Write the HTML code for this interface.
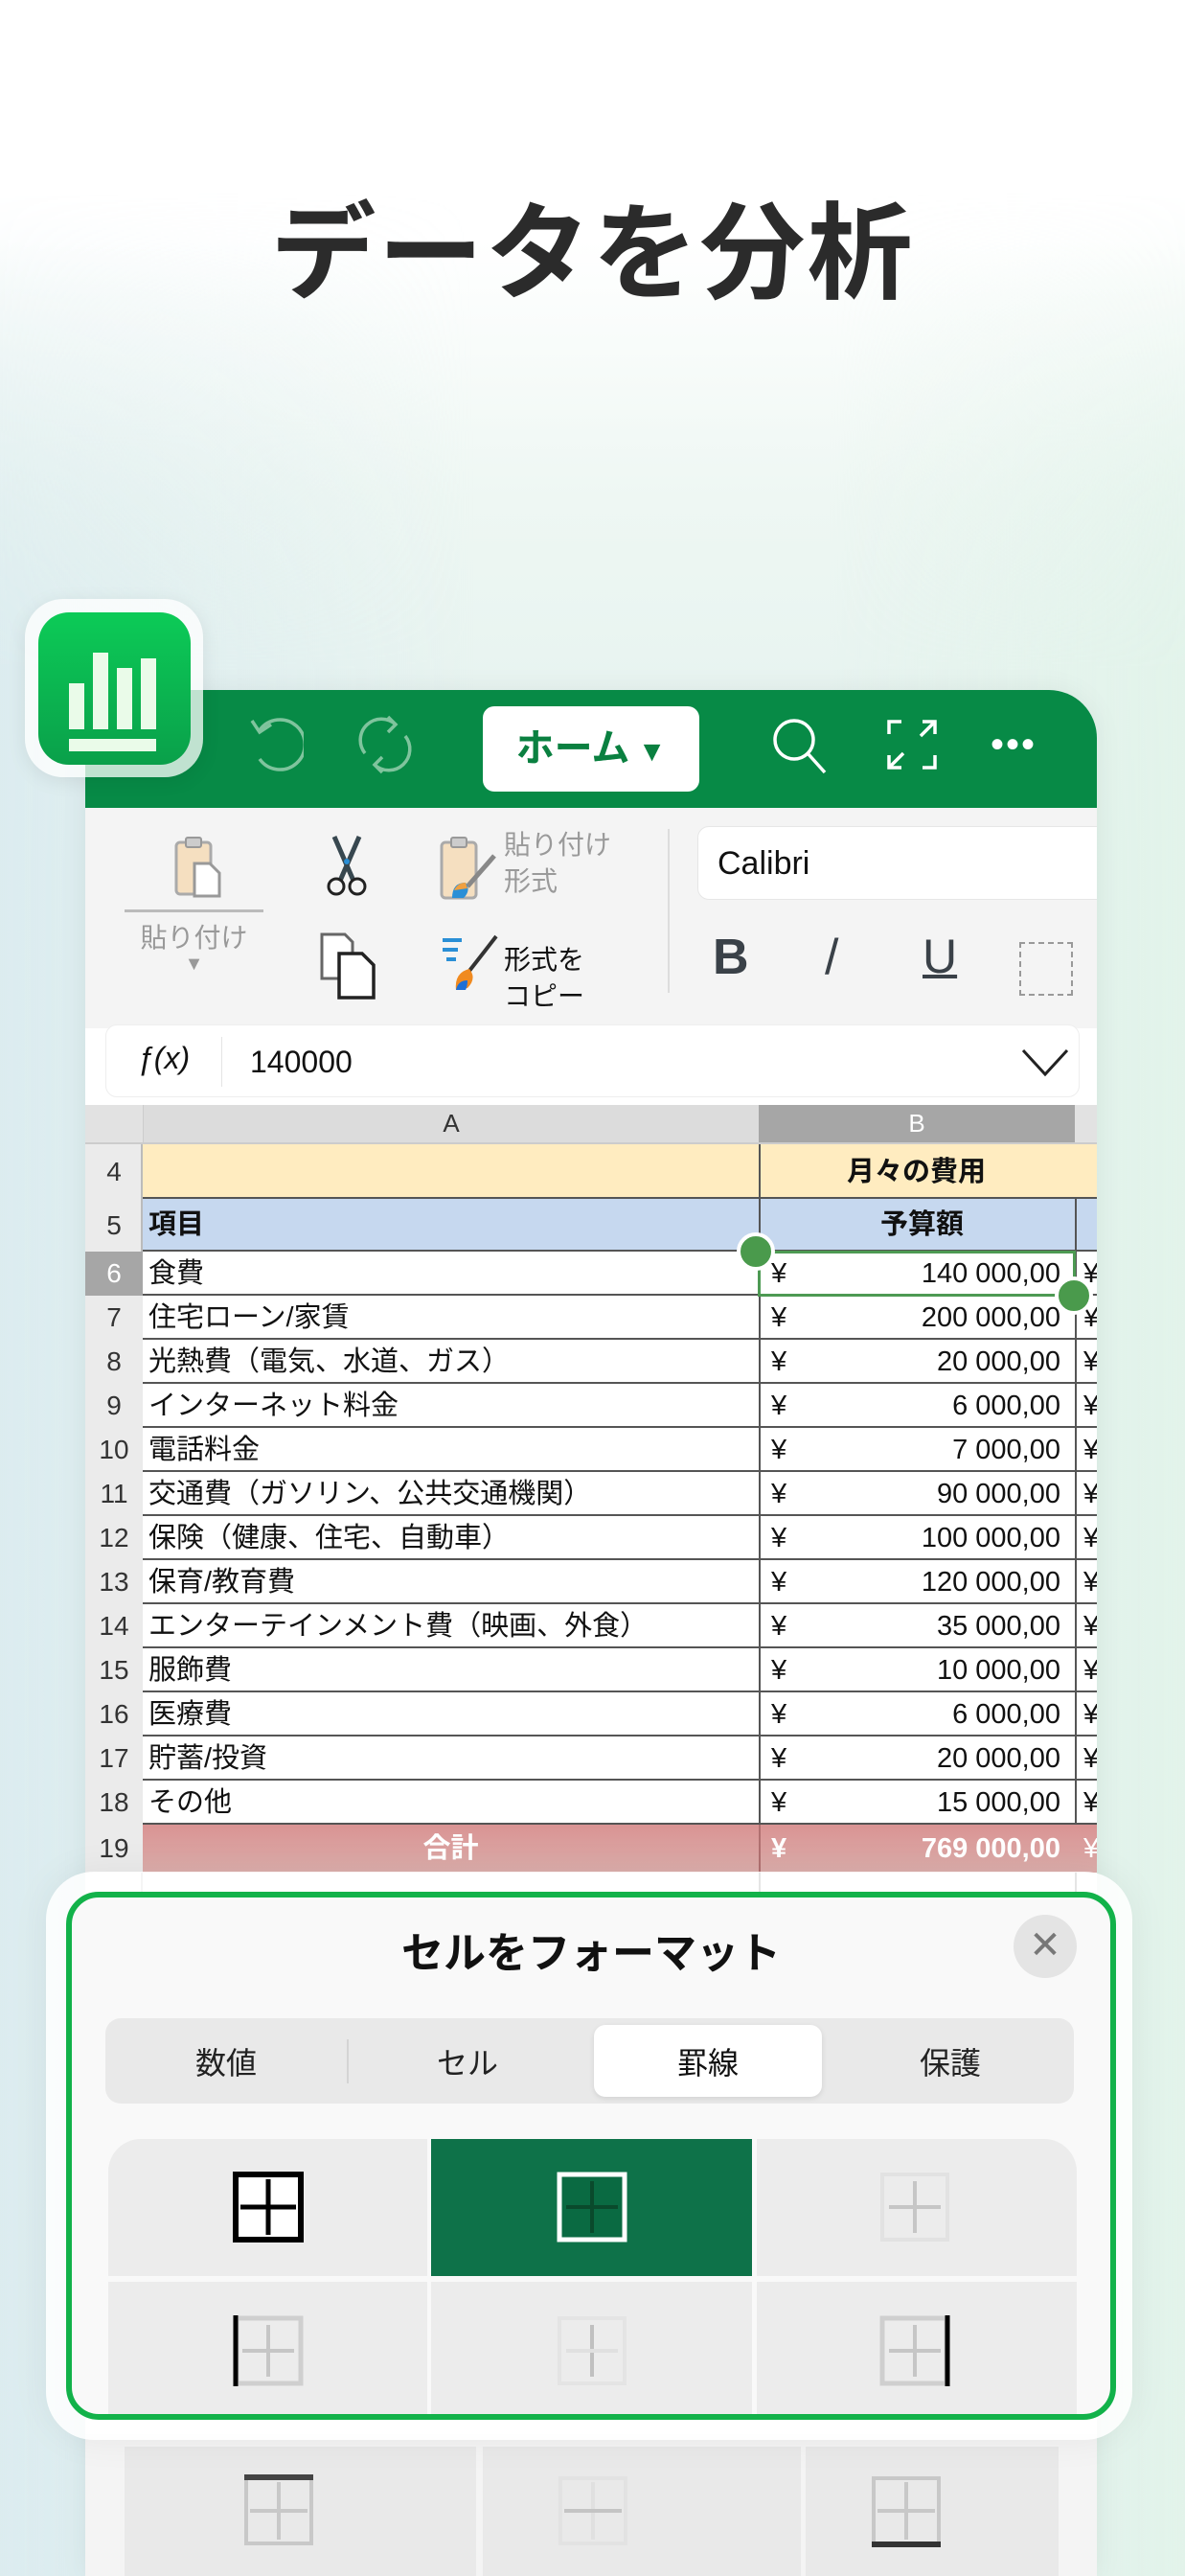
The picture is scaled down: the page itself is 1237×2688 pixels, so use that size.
<!DOCTYPE html>
<html><head><meta charset="utf-8"><style>
*{margin:0;padding:0;box-sizing:border-box}
body{width:1237px;height:2688px;overflow:hidden;position:relative;font-family:"Liberation Sans","Noto Sans CJK JP",sans-serif;
background:linear-gradient(180deg,#fff 0px,#fff 250px,#eef7f3 520px,#e2f1ee 900px,#e0efef 2688px);}
.abs{position:absolute}
.bgl{position:absolute;left:0;top:200px;width:1237px;height:2488px;background:linear-gradient(90deg,#dcecef 0%,rgba(230,243,240,0) 40%,rgba(225,242,234,0) 70%,#e2f3ea 100%);-webkit-mask-image:linear-gradient(180deg,transparent 0,#000 500px);mask-image:linear-gradient(180deg,transparent 0,#000 500px)}
h1{position:absolute;top:196px;left:0;width:1237px;text-align:center;font-size:110px;font-weight:bold;color:#2b2b2b;letter-spacing:2px;line-height:140px}
.win{position:absolute;left:89px;top:720px;width:1056px;height:1968px;background:#fff;border-radius:50px 50px 0 0;overflow:hidden;box-shadow:0 0 30px rgba(0,0,0,.06)}
.hdr{position:absolute;left:0;top:0;width:1056px;height:123px;background:#078a46}
.tb{position:absolute;left:0;top:123px;width:1056px;height:230px;background:#f4f4f4}
.cell{position:absolute;font-size:29px;color:#111;white-space:nowrap;line-height:46px}
.rn{position:absolute;left:0;width:60px;background:#ebebeb;color:#333;font-size:28px;text-align:center}
.row{position:absolute;left:0;width:1056px;border-bottom:2px solid #555}
</style></head><body>
<div class="bgl"></div>
<h1>データを分析</h1>

<div class="win">
 <div class="hdr">
  <svg class="abs" style="left:168px;top:24px" width="60" height="64" viewBox="0 0 60 64"><path d="M14 18 A26 26 0 1 1 14 48" fill="none" stroke="#7fc49d" stroke-width="3.5"/><path d="M6 8 L14 20 L26 12" fill="none" stroke="#7fc49d" stroke-width="3.5"/></svg>
  <svg class="abs" style="left:278px;top:22px" width="70" height="70" viewBox="0 0 70 70"><path d="M14 44 A22 22 0 0 1 46 14" fill="none" stroke="#7fc49d" stroke-width="3.5"/><path d="M56 26 A22 22 0 0 1 24 56" fill="none" stroke="#7fc49d" stroke-width="3.5"/><path d="M38 6 L46 14 L38 22" fill="none" stroke="#7fc49d" stroke-width="3.5"/><path d="M32 48 L24 56 L32 64" fill="none" stroke="#7fc49d" stroke-width="3.5"/></svg>
  <div class="abs" style="left:415px;top:17px;width:226px;height:89px;background:#fff;border-radius:12px;color:#0a8040;font-size:40px;font-weight:bold;line-height:89px;text-align:center">ホーム<span style="font-size:30px"> ▼</span></div>
  <svg class="abs" style="left:716px;top:28px" width="62" height="62" viewBox="0 0 62 62"><circle cx="24" cy="24" r="20" fill="none" stroke="#fff" stroke-width="3.5"/><path d="M38 38 L56 58" stroke="#fff" stroke-width="3.5"/></svg>
  <svg class="abs" style="left:836px;top:30px" width="54" height="54" viewBox="0 0 54 54" fill="none" stroke="#fff" stroke-width="3.5"><path d="M3 16V3H16M38 3H51V16M51 3L36 18M3 38V51H16M3 51L18 36M38 51H51V38"/></svg>
  <div class="abs" style="left:945px;top:42px;width:70px;font-size:40px;color:#fff;letter-spacing:2px;line-height:30px">•••</div>
 </div>
 <div class="tb">
  <svg class="abs" style="left:92px;top:28px" width="52" height="66" viewBox="0 0 52 66"><rect x="3" y="8" width="36" height="54" rx="4" fill="#f5dfc0" stroke="#aaa" stroke-width="3"/><rect x="13" y="3" width="16" height="10" rx="2" fill="#ccc" stroke="#999" stroke-width="2"/><path d="M22 30h16l10 10v24H22z" fill="#fff" stroke="#999" stroke-width="3"/></svg>
  <div class="abs" style="left:41px;top:106px;width:145px;height:3px;background:#bbb"></div>
  <div class="abs" style="left:41px;top:114px;width:145px;text-align:center;font-size:28px;color:#999">貼り付け</div>
  <div class="abs" style="left:41px;top:152px;width:145px;text-align:center;font-size:20px;color:#999">▼</div>
  <svg class="abs" style="left:250px;top:28px" width="46" height="66" viewBox="0 0 46 66"><path d="M10 2 L30 48 M36 2 L16 48" stroke="#37474f" stroke-width="5"/><circle cx="12" cy="54" r="8" fill="none" stroke="#222" stroke-width="3"/><circle cx="34" cy="54" r="8" fill="none" stroke="#222" stroke-width="3"/><circle cx="23" cy="28" r="3" fill="#2a8fd6"/></svg>
  <svg class="abs" style="left:243px;top:128px" width="64" height="72" viewBox="0 0 64 72"><path d="M4 4h24l8 8v38H4z" fill="#fff" stroke="#666" stroke-width="3"/><path d="M22 24h24l12 12v34H22z" fill="#fff" stroke="#222" stroke-width="3.5"/></svg>
  <svg class="abs" style="left:369px;top:28px" width="64" height="70" viewBox="0 0 64 70"><rect x="3" y="8" width="36" height="58" rx="4" fill="#f5dfc0" stroke="#aaa" stroke-width="3"/><rect x="13" y="3" width="16" height="10" rx="2" fill="#ccc" stroke="#999" stroke-width="2"/><path d="M58 22 L30 54" stroke="#888" stroke-width="5"/><path d="M14 66 Q14 50 28 50 Q34 58 26 66Z" fill="#2a8fd6"/><path d="M16 58 Q20 50 28 50 L30 56Z" fill="#f0a040"/></svg>
  <div class="abs" style="left:437px;top:20px;font-size:28px;color:#9a9a9a;line-height:38px">貼り付け<br>形式</div>
  <svg class="abs" style="left:369px;top:132px" width="64" height="60" viewBox="0 0 64 60"><path d="M4 6h20M4 16h16M8 26h10" stroke="#2a8fd6" stroke-width="4"/><path d="M60 2 L32 38" stroke="#333" stroke-width="4"/><path d="M18 58 Q16 40 32 36 Q40 46 30 56Z" fill="#f08a20"/><path d="M18 58 Q20 48 30 48 Q30 54 28 58Z" fill="#1d6fd6"/></svg>
  <div class="abs" style="left:437px;top:140px;font-size:28px;color:#111;line-height:38px">形式を<br>コピー</div>
  <div class="abs" style="left:608px;top:22px;width:2px;height:171px;background:#ddd"></div>
  <div class="abs" style="left:639px;top:19px;width:430px;height:77px;background:#fff;border-radius:12px;border:1px solid #e6e6e6;font-size:34px;line-height:77px;padding-left:20px;color:#111">Calibri</div>
  <div class="abs" style="left:655px;top:126px;font-size:52px;font-weight:bold;color:#3a4148">B</div>
  <div class="abs" style="left:772px;top:126px;font-size:52px;color:#3a4148">/</div>
  <div class="abs" style="left:874px;top:126px;font-size:50px;color:#3a4148;text-decoration:underline;text-decoration-thickness:4px">U</div>
  <div class="abs" style="left:975px;top:140px;width:56px;height:56px;border:2px dashed #999"></div>
 </div>
 <div class="abs" style="left:21px;top:349px;width:1017px;height:76px;background:#fff;border-radius:12px;border:1px solid #eee">
  <div class="abs" style="left:32px;top:16px;font-size:32px;font-style:italic;color:#111">ƒ(x)</div>
  <div class="abs" style="left:120px;top:12px;width:1px;height:52px;background:#e4e4e4"></div>
  <div class="abs" style="left:150px;top:20px;font-size:32px;color:#111">140000</div>
  <svg class="abs" style="left:955px;top:24px" width="50" height="30" viewBox="0 0 50 30"><path d="M2 2 L25 27 L48 2" fill="none" stroke="#222" stroke-width="3"/></svg>
 </div>
 <div class="abs" style="left:0;top:433px;width:1056px;height:39px;background:#e2e2e2"></div>
 <div class="abs" style="left:60px;top:433px;width:643px;height:39px;background:#dcdcdc;text-align:center;font-size:26px;line-height:39px;color:#333;border-left:1px solid #ccc">A</div>
 <div class="abs" style="left:703px;top:433px;width:330px;height:39px;background:#a6a6a6;text-align:center;font-size:26px;line-height:39px;color:#fff">B</div>
 <div class="abs" style="left:0;top:472px;width:1056px;height:2px;background:#ccc"></div>

 <div class="row" style="top:474px;height:57px;background:#ffecc0"></div>
 <div class="rn" style="top:474px;height:57px;line-height:57px">4</div>
 <div class="cell" style="left:795px;top:480px;font-weight:bold">月々の費用</div>
 <div class="row" style="top:531px;height:55px;background:#c6d8ef"></div>
 <div class="rn" style="top:531px;height:55px;line-height:55px">5</div>
 <div class="cell" style="left:66px;top:535px;font-weight:bold">項目</div>
 <div class="cell" style="left:830px;top:535px;font-weight:bold">予算額</div>

 <div class="abs" style="left:703px;top:474px;width:2px;height:1260px;background:#555"></div>
 <div class="abs" style="left:1033px;top:531px;width:2px;height:1200px;background:#555"></div>
 <div class="abs" style="left:58px;top:474px;width:2px;height:1260px;background:#bbb"></div>

 <div class="rn" style="top:586px;height:46px;line-height:46px;background:#a6a6a6;color:#fff">6</div>
 <div class="cell" style="left:66px;top:586px">食費</div><div class="cell" style="left:716px;top:586px">¥</div><div class="cell" style="right:38px;top:586px">140 000,00</div><div class="cell" style="left:1042px;top:586px">¥</div>
 <div class="row" style="top:586px;height:46px;left:60px;width:996px"></div>
 <div class="rn" style="top:632px;height:46px;line-height:46px">7</div>
 <div class="cell" style="left:66px;top:632px">住宅ローン/家賃</div><div class="cell" style="left:716px;top:632px">¥</div><div class="cell" style="right:38px;top:632px">200 000,00</div><div class="cell" style="left:1042px;top:632px">¥</div>
 <div class="row" style="top:632px;height:46px;left:60px;width:996px"></div>
 <div class="rn" style="top:678px;height:46px;line-height:46px">8</div>
 <div class="cell" style="left:66px;top:678px">光熱費（電気、水道、ガス）</div><div class="cell" style="left:716px;top:678px">¥</div><div class="cell" style="right:38px;top:678px">20 000,00</div><div class="cell" style="left:1042px;top:678px">¥</div>
 <div class="row" style="top:678px;height:46px;left:60px;width:996px"></div>
 <div class="rn" style="top:724px;height:46px;line-height:46px">9</div>
 <div class="cell" style="left:66px;top:724px">インターネット料金</div><div class="cell" style="left:716px;top:724px">¥</div><div class="cell" style="right:38px;top:724px">6 000,00</div><div class="cell" style="left:1042px;top:724px">¥</div>
 <div class="row" style="top:724px;height:46px;left:60px;width:996px"></div>
 <div class="rn" style="top:770px;height:46px;line-height:46px">10</div>
 <div class="cell" style="left:66px;top:770px">電話料金</div><div class="cell" style="left:716px;top:770px">¥</div><div class="cell" style="right:38px;top:770px">7 000,00</div><div class="cell" style="left:1042px;top:770px">¥</div>
 <div class="row" style="top:770px;height:46px;left:60px;width:996px"></div>
 <div class="rn" style="top:816px;height:46px;line-height:46px">11</div>
 <div class="cell" style="left:66px;top:816px">交通費（ガソリン、公共交通機関）</div><div class="cell" style="left:716px;top:816px">¥</div><div class="cell" style="right:38px;top:816px">90 000,00</div><div class="cell" style="left:1042px;top:816px">¥</div>
 <div class="row" style="top:816px;height:46px;left:60px;width:996px"></div>
 <div class="rn" style="top:862px;height:46px;line-height:46px">12</div>
 <div class="cell" style="left:66px;top:862px">保険（健康、住宅、自動車）</div><div class="cell" style="left:716px;top:862px">¥</div><div class="cell" style="right:38px;top:862px">100 000,00</div><div class="cell" style="left:1042px;top:862px">¥</div>
 <div class="row" style="top:862px;height:46px;left:60px;width:996px"></div>
 <div class="rn" style="top:908px;height:46px;line-height:46px">13</div>
 <div class="cell" style="left:66px;top:908px">保育/教育費</div><div class="cell" style="left:716px;top:908px">¥</div><div class="cell" style="right:38px;top:908px">120 000,00</div><div class="cell" style="left:1042px;top:908px">¥</div>
 <div class="row" style="top:908px;height:46px;left:60px;width:996px"></div>
 <div class="rn" style="top:954px;height:46px;line-height:46px">14</div>
 <div class="cell" style="left:66px;top:954px">エンターテインメント費（映画、外食）</div><div class="cell" style="left:716px;top:954px">¥</div><div class="cell" style="right:38px;top:954px">35 000,00</div><div class="cell" style="left:1042px;top:954px">¥</div>
 <div class="row" style="top:954px;height:46px;left:60px;width:996px"></div>
 <div class="rn" style="top:1000px;height:46px;line-height:46px">15</div>
 <div class="cell" style="left:66px;top:1000px">服飾費</div><div class="cell" style="left:716px;top:1000px">¥</div><div class="cell" style="right:38px;top:1000px">10 000,00</div><div class="cell" style="left:1042px;top:1000px">¥</div>
 <div class="row" style="top:1000px;height:46px;left:60px;width:996px"></div>
 <div class="rn" style="top:1046px;height:46px;line-height:46px">16</div>
 <div class="cell" style="left:66px;top:1046px">医療費</div><div class="cell" style="left:716px;top:1046px">¥</div><div class="cell" style="right:38px;top:1046px">6 000,00</div><div class="cell" style="left:1042px;top:1046px">¥</div>
 <div class="row" style="top:1046px;height:46px;left:60px;width:996px"></div>
 <div class="rn" style="top:1092px;height:46px;line-height:46px">17</div>
 <div class="cell" style="left:66px;top:1092px">貯蓄/投資</div><div class="cell" style="left:716px;top:1092px">¥</div><div class="cell" style="right:38px;top:1092px">20 000,00</div><div class="cell" style="left:1042px;top:1092px">¥</div>
 <div class="row" style="top:1092px;height:46px;left:60px;width:996px"></div>
 <div class="rn" style="top:1138px;height:46px;line-height:46px">18</div>
 <div class="cell" style="left:66px;top:1138px">その他</div><div class="cell" style="left:716px;top:1138px">¥</div><div class="cell" style="right:38px;top:1138px">15 000,00</div><div class="cell" style="left:1042px;top:1138px">¥</div>
 <div class="row" style="top:1138px;height:46px;left:60px;width:996px"></div>
 <div class="abs" style="left:60px;top:1184px;width:996px;height:50px;background:linear-gradient(180deg,#d99393,#dcaeab)"></div>
 <div class="rn" style="top:1184px;height:50px;line-height:50px">19</div>
 <div class="cell" style="left:60px;width:643px;text-align:center;top:1186px;color:#fff;font-weight:bold">合計</div><div class="cell" style="left:716px;top:1186px;color:#fff;font-weight:bold">¥</div><div class="cell" style="right:38px;top:1186px;color:#fff;font-weight:bold">769 000,00</div><div class="cell" style="left:1042px;top:1186px;color:#fff">¥</div>
 <div class="abs" style="left:703px;top:1184px;width:2px;height:50px;background:#b07070"></div>
 <div class="abs" style="left:702px;top:585px;width:332px;height:48px;border:3px solid #4d9a53"></div>
 <div class="abs" style="left:680px;top:566px;width:40px;height:40px;border-radius:50%;background:#4a9a4c;border:4px solid #fff"></div>
 <div class="abs" style="left:1012px;top:612px;width:40px;height:40px;border-radius:50%;background:#4a9a4c;border:4px solid #fff"></div>

 <div class="abs" style="left:0;top:1820px;width:1056px;height:150px;background:#f4f4f4"></div>
 <div class="abs" style="left:41px;top:1833px;width:367px;height:140px;background:#e9e9e9"></div>
 <div class="abs" style="left:415px;top:1833px;width:332px;height:140px;background:#e9e9e9"></div>
 <div class="abs" style="left:752px;top:1833px;width:264px;height:140px;background:#e9e9e9"></div>
 <svg class="abs" style="left:165px;top:1862px" width="74" height="76" viewBox="0 0 74 76"><rect x="3" y="4" width="68" height="68" fill="none" stroke="#c8c8c8" stroke-width="4"/><path d="M37 8V68M7 38H67" stroke="#c8c8c8" stroke-width="4"/><path d="M1 3H73" stroke="#444" stroke-width="6"/></svg>
 <svg class="abs" style="left:493px;top:1862px" width="74" height="76" viewBox="0 0 74 76"><rect x="3" y="4" width="68" height="68" fill="none" stroke="#e2e2e2" stroke-width="4"/><path d="M37 8V68" stroke="#e0e0e0" stroke-width="4"/><path d="M7 38H67" stroke="#c4c4c4" stroke-width="4"/></svg>
 <svg class="abs" style="left:820px;top:1862px" width="74" height="76" viewBox="0 0 74 76"><rect x="3" y="4" width="68" height="68" fill="none" stroke="#c8c8c8" stroke-width="4"/><path d="M37 8V68M7 38H67" stroke="#c8c8c8" stroke-width="4"/><path d="M1 73H73" stroke="#333" stroke-width="6"/></svg>
</div>

<div class="abs" style="left:26px;top:625px;width:186px;height:186px;border-radius:40px;background:rgba(255,255,255,.75);box-shadow:0 4px 20px rgba(0,0,0,.08)"></div>
<div class="abs" style="left:40px;top:639px;width:159px;height:159px;border-radius:32px;background:linear-gradient(180deg,#0ccb57,#0aa04a)">
 <div class="abs" style="left:32px;top:74px;width:16px;height:48px;background:#eafbe9"></div>
 <div class="abs" style="left:57px;top:42px;width:16px;height:80px;background:#eafbe9"></div>
 <div class="abs" style="left:82px;top:58px;width:16px;height:64px;background:#eafbe9"></div>
 <div class="abs" style="left:107px;top:48px;width:16px;height:74px;background:#eafbe9"></div>
 <div class="abs" style="left:32px;top:132px;width:91px;height:13px;background:#eafbe9"></div>
</div>

<div class="abs" style="left:48px;top:1953px;width:1134px;height:593px;border-radius:50px;background:rgba(255,255,255,.85);box-shadow:0 0 40px rgba(0,0,0,.06)"></div>
<div class="abs" style="left:69px;top:1974px;width:1096px;height:551px;border-radius:34px;border:6px solid #12b24a;background:#f9f9f9;overflow:hidden">
 <div class="abs" style="left:0;top:22px;width:1084px;text-align:center;font-size:44px;font-weight:bold;color:#111">セルをフォーマット</div>
 <div class="abs" style="left:983px;top:18px;width:66px;height:66px;border-radius:50%;background:#e4e4e4;text-align:center;line-height:64px;font-size:40px;color:#777">✕</div>
 <div class="abs" style="left:35px;top:126px;width:1011px;height:89px;border-radius:16px;background:#e9e9e9">
  <div class="abs" style="left:0;top:22px;width:252px;text-align:center;font-size:32px;color:#222">数値</div>
  <div class="abs" style="left:252px;top:22px;width:2px;height:46px;background:#d4d4d4"></div>
  <div class="abs" style="left:252px;top:22px;width:252px;text-align:center;font-size:32px;color:#222">セル</div>
  <div class="abs" style="left:510px;top:7px;width:238px;height:75px;border-radius:12px;background:#fff;box-shadow:0 2px 6px rgba(0,0,0,.1)"></div>
  <div class="abs" style="left:510px;top:22px;width:238px;text-align:center;font-size:32px;color:#111">罫線</div>
  <div class="abs" style="left:756px;top:22px;width:252px;text-align:center;font-size:32px;color:#222">保護</div>
 </div>
 <div class="abs" style="left:38px;top:252px;width:333px;height:143px;background:#ececec;border-radius:34px 0 0 0"></div>
 <div class="abs" style="left:375px;top:252px;width:335px;height:143px;background:#0e7249"></div>
 <div class="abs" style="left:715px;top:252px;width:334px;height:143px;background:#ececec;border-radius:0 34px 0 0"></div>
 <div class="abs" style="left:38px;top:401px;width:333px;height:150px;background:#ececec"></div>
 <div class="abs" style="left:375px;top:401px;width:335px;height:150px;background:#ececec"></div>
 <div class="abs" style="left:715px;top:401px;width:334px;height:150px;background:#ececec"></div>
 <svg class="abs" style="left:168px;top:286px" width="74" height="74" viewBox="0 0 74 74"><rect x="3" y="3" width="68" height="68" fill="#fff" stroke="#000" stroke-width="6"/><path d="M37 8V66M8 37H66" stroke="#000" stroke-width="5"/></svg>
 <svg class="abs" style="left:506px;top:286px" width="74" height="74" viewBox="0 0 74 74"><rect x="3" y="3" width="68" height="68" fill="#0a6a42" stroke="#fff" stroke-width="5"/><path d="M37 10V64M10 37H64" stroke="#0a4a2c" stroke-width="4"/></svg>
 <svg class="abs" style="left:843px;top:286px" width="74" height="74" viewBox="0 0 74 74"><rect x="3" y="3" width="68" height="68" fill="none" stroke="#e2e2e2" stroke-width="4"/><path d="M37 10V64M10 37H64" stroke="#c6c6c6" stroke-width="4"/></svg>
 <svg class="abs" style="left:168px;top:436px" width="74" height="74" viewBox="0 0 74 74"><rect x="4" y="3" width="67" height="68" fill="none" stroke="#cfcfcf" stroke-width="5"/><path d="M37 10V64M10 37H64" stroke="#c6c6c6" stroke-width="4"/><path d="M3 0V74" stroke="#000" stroke-width="5"/></svg>
 <svg class="abs" style="left:506px;top:436px" width="74" height="74" viewBox="0 0 74 74"><rect x="3" y="3" width="68" height="68" fill="none" stroke="#e4e4e4" stroke-width="4"/><path d="M37 10V64" stroke="#c0c0c0" stroke-width="4"/><path d="M10 37H64" stroke="#e0e0e0" stroke-width="4"/></svg>
 <svg class="abs" style="left:843px;top:436px" width="74" height="74" viewBox="0 0 74 74"><rect x="3" y="3" width="67" height="68" fill="none" stroke="#cfcfcf" stroke-width="5"/><path d="M37 10V64M10 37H64" stroke="#c6c6c6" stroke-width="4"/><path d="M71 0V74" stroke="#000" stroke-width="5"/></svg>
</div>
</body></html>
